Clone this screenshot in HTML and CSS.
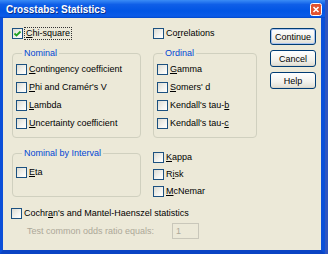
FILE: index.html
```html
<!DOCTYPE html>
<html lang="en">
  <head>
    <meta charset="utf-8" />
    <title>Crosstabs: Statistics</title>
    <link rel="stylesheet" href="styles.css">
  </head>
  <body>
    <div class="window">
      <div class="titlebar">
        <span class="title">Crosstabs: Statistics</span>
        <span class="close">
          <svg width="12" height="13" viewBox="0 0 12 13">
            <rect x="0.5" y="0.5" width="11" height="12" rx="2" fill="#E2512F" stroke="#fff"/>
            <path d="M3.5 4 L8.5 9 M8.5 4 L3.5 9" stroke="#fff" stroke-width="1.6"/>
          </svg>
        </span>
      </div>

      <div class="client">
        <div class="options">
          <div class="grid">
            <label class="check"><span class="box checked"><svg width="9" height="9" viewBox="0 0 9 9"><path d="M1.5 4.5 L3.5 6.5 L7.5 2.5" fill="none" stroke="#21A121" stroke-width="1.8"/></svg></span><span class="focus"><u>C</u>hi-square</span></label>
            <label class="check"><span class="box"></span><span>Co<u>r</u>relations</span></label>

            <fieldset class="group">
              <legend>Nominal</legend>
              <label class="check"><span class="box"></span><span><u>C</u>ontingency coefficient</span></label>
              <label class="check"><span class="box"></span><span><u>P</u>hi and Cramér's V</span></label>
              <label class="check"><span class="box"></span><span><u>L</u>ambda</span></label>
              <label class="check"><span class="box"></span><span><u>U</u>ncertainty coefficient</span></label>
            </fieldset>

            <fieldset class="group">
              <legend>Ordinal</legend>
              <label class="check"><span class="box"></span><span><u>G</u>amma</span></label>
              <label class="check"><span class="box"></span><span><u>S</u>omers' d</span></label>
              <label class="check"><span class="box"></span><span>Kendall's tau-<u>b</u></span></label>
              <label class="check"><span class="box"></span><span>Kendall's tau-<u>c</u></span></label>
            </fieldset>

            <fieldset class="group interval">
              <legend>Nominal by Interval</legend>
              <label class="check"><span class="box"></span><span><u>E</u>ta</span></label>
            </fieldset>

            <div class="stack">
              <label class="check"><span class="box"></span><span><u>K</u>appa</span></label>
              <label class="check"><span class="box"></span><span>R<u>i</u>sk</span></label>
              <label class="check"><span class="box"></span><span><u>M</u>cNemar</span></label>
            </div>
          </div>

          <label class="check cochran"><span class="box"></span><span>Cochr<u>a</u>n's and Mantel-Haenszel statistics</span></label>
          <div class="odds">
            <span>Test common odds ratio equals:</span>
            <span class="field">1</span>
          </div>
        </div>

        <div class="buttons">
          <button class="default">Continue</button>
          <button>Cancel</button>
          <button>Help</button>
        </div>
      </div>
    </div>
  </body>
</html>
```

FILE: styles.css
```css
html {
  background: #2F55C0;
}
body {
  margin: 0;
  font-family: 'Liberation Sans', Arial, sans-serif;
  font-size: 9px;
  color: #000;
}

.window {
  width: 325px;
  height: 254px;
  box-sizing: border-box;
  background: #0A55E0;
  border-left: 3px solid #0B4FD8;
  border-right: 4px solid #0B4FD8;
  border-bottom: 4px solid #0A44C4;
  display: flex;
  flex-direction: column;
}

.titlebar {
  height: 18px;
  margin: 0 -4px 0 -3px;
  padding: 0 3px 0 6px;
  display: flex;
  align-items: center;
  justify-content: space-between;
  background: linear-gradient(#3A8CF6, #0F5FE8 25%, #0155E4 60%, #0A5BE8 90%, #0046C8);
}
.titlebar .title {
  color: #fff;
  font-weight: bold;
  font-size: 10px;
  text-shadow: 1px 1px 0 #0A2F8A;
}
.titlebar .close {
  display: flex;
  margin-top: 1px;
}

.client {
  flex: 1;
  background: #ECE9D8;
  display: flex;
  padding: 10px 0 0 9px;
}

.options {
  width: 245px;
}
.grid {
  display: grid;
  grid-template-columns: 129px 104px;
  column-gap: 12px;
}

.check {
  display: flex;
  align-items: center;
  gap: 2px;
  height: 11px;
  line-height: 11px;
  white-space: nowrap;
}
.check u {
  text-decoration-thickness: 1px;
  text-underline-offset: 1px;
}
.box {
  width: 9px;
  height: 9px;
  flex: none;
  display: flex;
  align-items: center;
  justify-content: center;
  border: 1px solid #1C5180;
  background: linear-gradient(135deg, #DCDBD3, #F4F4F0 60%, #fff);
}
.focus {
  outline: 1px dotted #333;
  outline-offset: 0;
  padding: 0 1px;
}

.group {
  margin: 9px 0 0;
  padding: 5px 0 8px 3px;
  min-width: 0;
  border: 1px solid #D0D0BF;
  border-radius: 4px;
  display: flex;
  flex-direction: column;
  gap: 7px;
}
.group legend {
  color: #0046D5;
  line-height: 11px;
  margin-left: 6px;
  padding: 0 2px;
}
.group.interval {
  margin-top: 10px;
  padding-top: 8px;
  padding-bottom: 16px;
}

.stack {
  margin-top: 10px;
  padding-top: 4px;
  display: flex;
  flex-direction: column;
  gap: 6px;
}

.cochran {
  margin: 11px 0 0 -1px;
}
.odds {
  margin-top: 4px;
  padding-left: 15px;
  height: 16px;
  display: flex;
  align-items: center;
  color: #ACA899;
}
.odds .field {
  margin-left: 18px;
  width: 27px;
  height: 16px;
  box-sizing: border-box;
  border: 1px solid #C9C7BA;
  padding-left: 3px;
  line-height: 14px;
}

.buttons {
  margin-left: 13px;
  width: 46px;
  display: flex;
  flex-direction: column;
  gap: 5px;
}
.buttons button {
  height: 17px;
  padding: 0;
  font-family: inherit;
  font-size: 9px;
  color: #000;
  border: 1px solid #003C74;
  border-radius: 3px;
  background: linear-gradient(#FFFFFF, #F2F1EC 60%, #E4E2D8 90%, #D6D0C5);
}
.buttons button.default {
  box-shadow: inset 0 0 0 1px #A9C3F0;
}
```
